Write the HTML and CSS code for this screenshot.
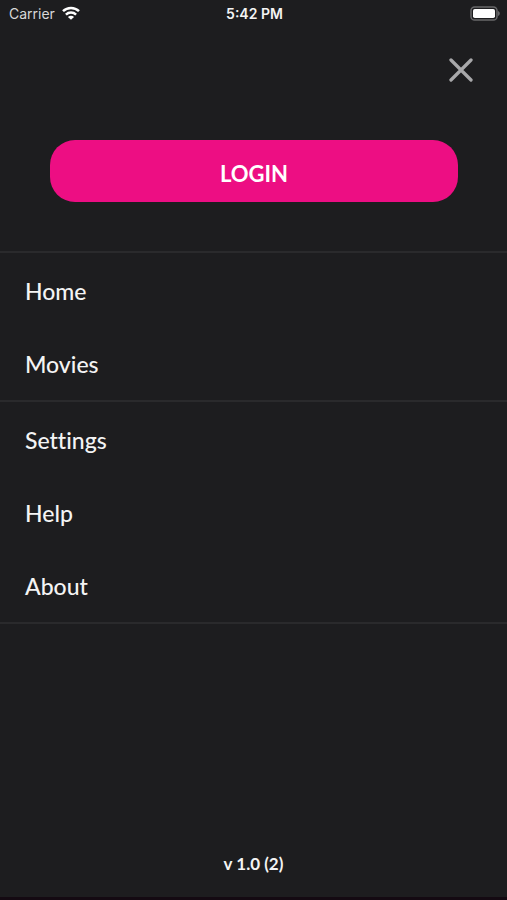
FILE: index.html
```html
<!DOCTYPE html>
<html lang="en">
<head>
<meta charset="utf-8">
<meta name="viewport" content="width=device-width, initial-scale=1">
<title>Menu</title>
<link rel="stylesheet" href="styles.css">
</head>
<body>
<div class="screen">
  <header class="status">
    <div class="carrier">
      <span>Carrier</span>
      <svg class="wifi" viewBox="0 0 18 14" aria-hidden="true">
        <path d="M1 5.200C5.400.9 12.600.9 17 5.200M3.900 8.600c2.900-2.700 7.300-2.700 10.200 0" fill="none" stroke="currentColor" stroke-width="2.500"/>
        <path d="M9 13.800 5.900 10.900c1.700-1.600 4.500-1.600 6.200 0z" fill="currentColor"/>
      </svg>
    </div>
    <time class="clock">5:42 PM</time>
    <svg class="battery" viewBox="0 0 30 15" aria-hidden="true">
      <rect x="1" y="1" width="26" height="13" rx="3.600" fill="none" stroke="#68686a" stroke-width="1.500"/>
      <rect x="3" y="3" width="22" height="9" rx="1.800" fill="#fff"/>
      <path d="M28 5v5c2.400-.8 2.400-4.200 0-5z" fill="#68686a"/>
    </svg>
  </header>
  <div class="toolbar">
    <button class="close" type="button" aria-label="Close">
      <svg viewBox="0 0 24 24" aria-hidden="true"><path d="M2 2l20 20M22 2L2 22" fill="none" stroke="currentColor" stroke-width="3.300" stroke-linecap="round"/></svg>
    </button>
  </div>
  <div class="account"><button class="login" type="button">LOGIN</button></div>
  <nav class="menu">
    <ul class="group">
      <li><a href="#home">Home</a></li>
      <li><a href="#movies">Movies</a></li>
    </ul>
    <ul class="group">
      <li><a href="#settings">Settings</a></li>
      <li><a href="#help">Help</a></li>
      <li><a href="#about">About</a></li>
    </ul>
  </nav>
  <footer class="version">v 1.0 (2)</footer>
</div>
</body>
</html>
```
FILE: styles.css
```css
* { box-sizing: border-box; }
body {
  margin: 0;
  background: #1d1d1f;
  color: #f4f4f4;
  font-family: Lato, "Liberation Sans", sans-serif;
  font-variant-ligatures: none;
}
.screen {
  display: flex;
  flex-direction: column;
  min-height: 100vh;
  border-bottom: 3px solid #140a12;
}
.status {
  display: grid;
  grid-template-columns: 1fr auto 1fr;
  align-items: center;
  height: 26px;
  padding: 0 7px 0 9px;
  font: 14px Inter, Roboto, sans-serif;
}
.carrier { display: flex; align-items: center; gap: 7px; color: #d8d8d8; }
.wifi { width: 18px; height: 14px; color: #fff; }
.clock { font-weight: 600; }
.battery { width: 30px; height: 15px; justify-self: end; }
.toolbar { display: flex; justify-content: flex-end; padding: 26px 28px 0; }
.close {
  display: grid;
  place-items: center;
  width: 36px;
  height: 36px;
  padding: 0;
  border: 0;
  background: none;
  color: #a8a8aa;
}
.close svg { width: 24px; height: 24px; }
.account { padding: 52px 49px 49px 50px; }
.login {
  display: block;
  width: 100%;
  height: 62px;
  padding: 5px 0 0;
  border: 0;
  border-radius: 25px;
  background: #ed0e83;
  color: #fff;
  font: bold 22px/28px Lato, "Liberation Sans", sans-serif;
}
.menu { border-top: 2px solid #2a2a2c; }
.group {
  margin: 0;
  padding: 1px 0 0;
  border-bottom: 2px solid #2a2a2c;
  list-style: none;
}
.group a {
  display: flex;
  align-items: center;
  height: 73px;
  padding: 0 25px;
  color: inherit;
  font-size: 23px;
  font-weight: 500;
  text-decoration: none;
}
.version {
  margin-top: auto;
  padding-bottom: 23px;
  text-align: center;
  font-size: 17px;
  font-weight: bold;
  line-height: 20px;
}
```
